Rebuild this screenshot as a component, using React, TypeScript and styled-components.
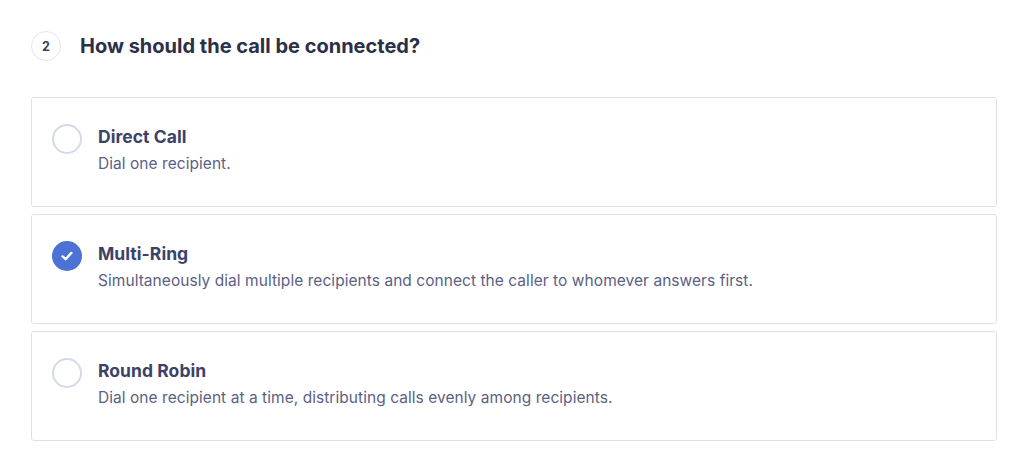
import React from "react";
import styled, { createGlobalStyle } from "styled-components";

const Global = createGlobalStyle`
  html, body { margin: 0; padding: 0; background: #ffffff; }
  body { font-family: Inter, "Noto Sans", sans-serif; -webkit-font-smoothing: antialiased; }
`;

const Page = styled.div`
  padding: 31px 27px 0 31px;
  display: flex;
  flex-direction: column;
`;

const Header = styled.div`
  display: flex;
  align-items: center;
  gap: 19px;
  margin-bottom: 36px;
`;

const StepBadge = styled.div`
  width: 30px;
  height: 30px;
  box-sizing: border-box;
  border-radius: 50%;
  border: 1.5px solid #e1e5f1;
  display: flex;
  align-items: center;
  justify-content: center;
  font-size: 12.5px;
  font-weight: 700;
  color: #3a3f5c;
`;

const Heading = styled.h2`
  margin: 0;
  font-size: 20px;
  font-weight: 700;
  color: #2b2f47;
  letter-spacing: 0;
`;

const List = styled.div`
  display: flex;
  flex-direction: column;
  gap: 7.5px;
`;

const Card = styled.label`
  display: flex;
  align-items: flex-start;
  gap: 16px;
  height: 109.5px;
  box-sizing: border-box;
  padding: 26px 20px 0 20px;
  border: 1px solid #dde1ee;
  border-radius: 3px;
  background: #fff;
  cursor: pointer;
`;

const Radio = styled.div<{ $checked: boolean }>`
  flex: none;
  width: 30px;
  height: 30px;
  box-sizing: border-box;
  border-radius: 50%;
  border: ${(p) => (p.$checked ? "none" : "2px solid #d3d9e6")};
  background: ${(p) => (p.$checked ? "#4b72d4" : "#fff")};
  display: flex;
  align-items: center;
  justify-content: center;
`;

const Texts = styled.div`
  display: flex;
  flex-direction: column;
  gap: 5px;
  padding-top: 2px;
`;

const Title = styled.div`
  font-size: 17.5px;
  line-height: 22px;
  font-weight: 700;
  color: #3d4268;
  letter-spacing: 0.05px;
`;

const Desc = styled.div`
  font-size: 15.5px;
  line-height: 22px;
  color: #5b6184;
  letter-spacing: 0.05px;
`;

const options = [
  { title: "Direct Call", desc: "Dial one recipient.", checked: false },
  {
    title: "Multi-Ring",
    desc: "Simultaneously dial multiple recipients and connect the caller to whomever answers first.",
    checked: true,
  },
  {
    title: "Round Robin",
    desc: "Dial one recipient at a time, distributing calls evenly among recipients.",
    checked: false,
  },
];

export default function App() {
  return (
    <>
      <Global />
      <Page>
        <Header>
          <StepBadge>2</StepBadge>
          <Heading>How should the call be connected?</Heading>
        </Header>
        <List>
          {options.map((o) => (
            <Card key={o.title}>
              <Radio $checked={o.checked}>
                {o.checked && (
                  <svg width="16" height="16" viewBox="0 0 16 16" fill="none">
                    <path
                      d="M3.6 8.4 L6.6 11.2 L12.4 4.9"
                      stroke="#fff"
                      strokeWidth="2.4"
                      strokeLinecap="round"
                      strokeLinejoin="round"
                    />
                  </svg>
                )}
              </Radio>
              <Texts>
                <Title>{o.title}</Title>
                <Desc>{o.desc}</Desc>
              </Texts>
            </Card>
          ))}
        </List>
      </Page>
    </>
  );
}
